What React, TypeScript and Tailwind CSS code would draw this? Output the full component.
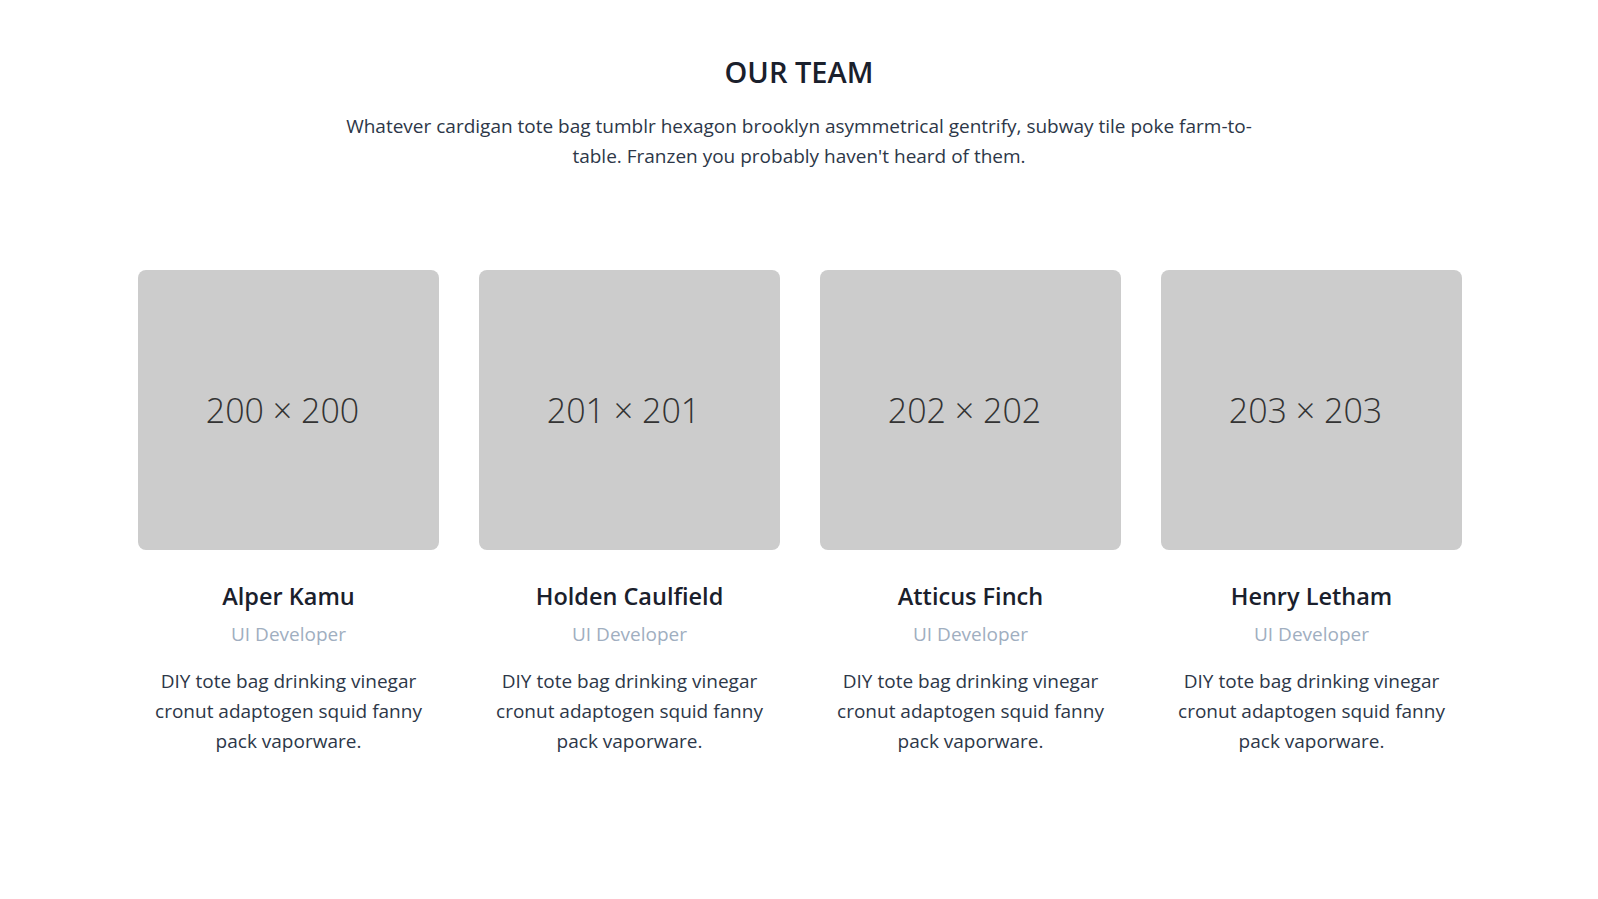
import React from 'react';

const team = [
  { name: 'Alper Kamu', size: '200 × 200' },
  { name: 'Holden Caulfield', size: '201 × 201' },
  { name: 'Atticus Finch', size: '202 × 202' },
  { name: 'Henry Letham', size: '203 × 203' },
];

export default function App() {
  return (
    <div className="min-h-screen bg-white text-[#1a202c]" style={{ fontFamily: '"Open Sans", "Noto Sans", sans-serif' }}>
      <section className="pt-[51px] pb-20">
        {/* Heading */}
        <div className="flex flex-col items-center text-center">
          <h1 className="text-[29px] font-semibold leading-[42px] text-[#1a202c]">OUR TEAM</h1>
          <p className="mt-[18px] max-w-[925px] text-[19px] leading-[30px] text-[#2d3748]">
            Whatever cardigan tote bag tumblr hexagon brooklyn asymmetrical gentrify, subway tile poke farm-to-table. Franzen you probably haven't heard of them.
          </p>
        </div>

        {/* Cards */}
        <div className="mx-auto mt-[99px] grid w-[1324px] translate-x-px grid-cols-4 gap-10">
          {team.map((m) => (
            <div key={m.name} className="flex flex-col items-center text-center">
              <div className="flex h-[280px] w-full items-center justify-center rounded-lg bg-[#cccccc] pr-3">
                <span className="text-[34px] font-light text-[#333333]">{m.size}</span>
              </div>
              <h2 className="mt-[30px] text-[23.5px] font-semibold leading-[32px] text-[#1a202c]">{m.name}</h2>
              <p className="mt-[9px] text-[19px] leading-[26px] text-[#a0aec0]">UI Developer</p>
              <p className="mt-[19px] px-2 text-[19px] leading-[30px] text-[#2d3748]">
                DIY tote bag drinking vinegar cronut adaptogen squid fanny pack vaporware.
              </p>
            </div>
          ))}
        </div>
      </section>
    </div>
  );
}
